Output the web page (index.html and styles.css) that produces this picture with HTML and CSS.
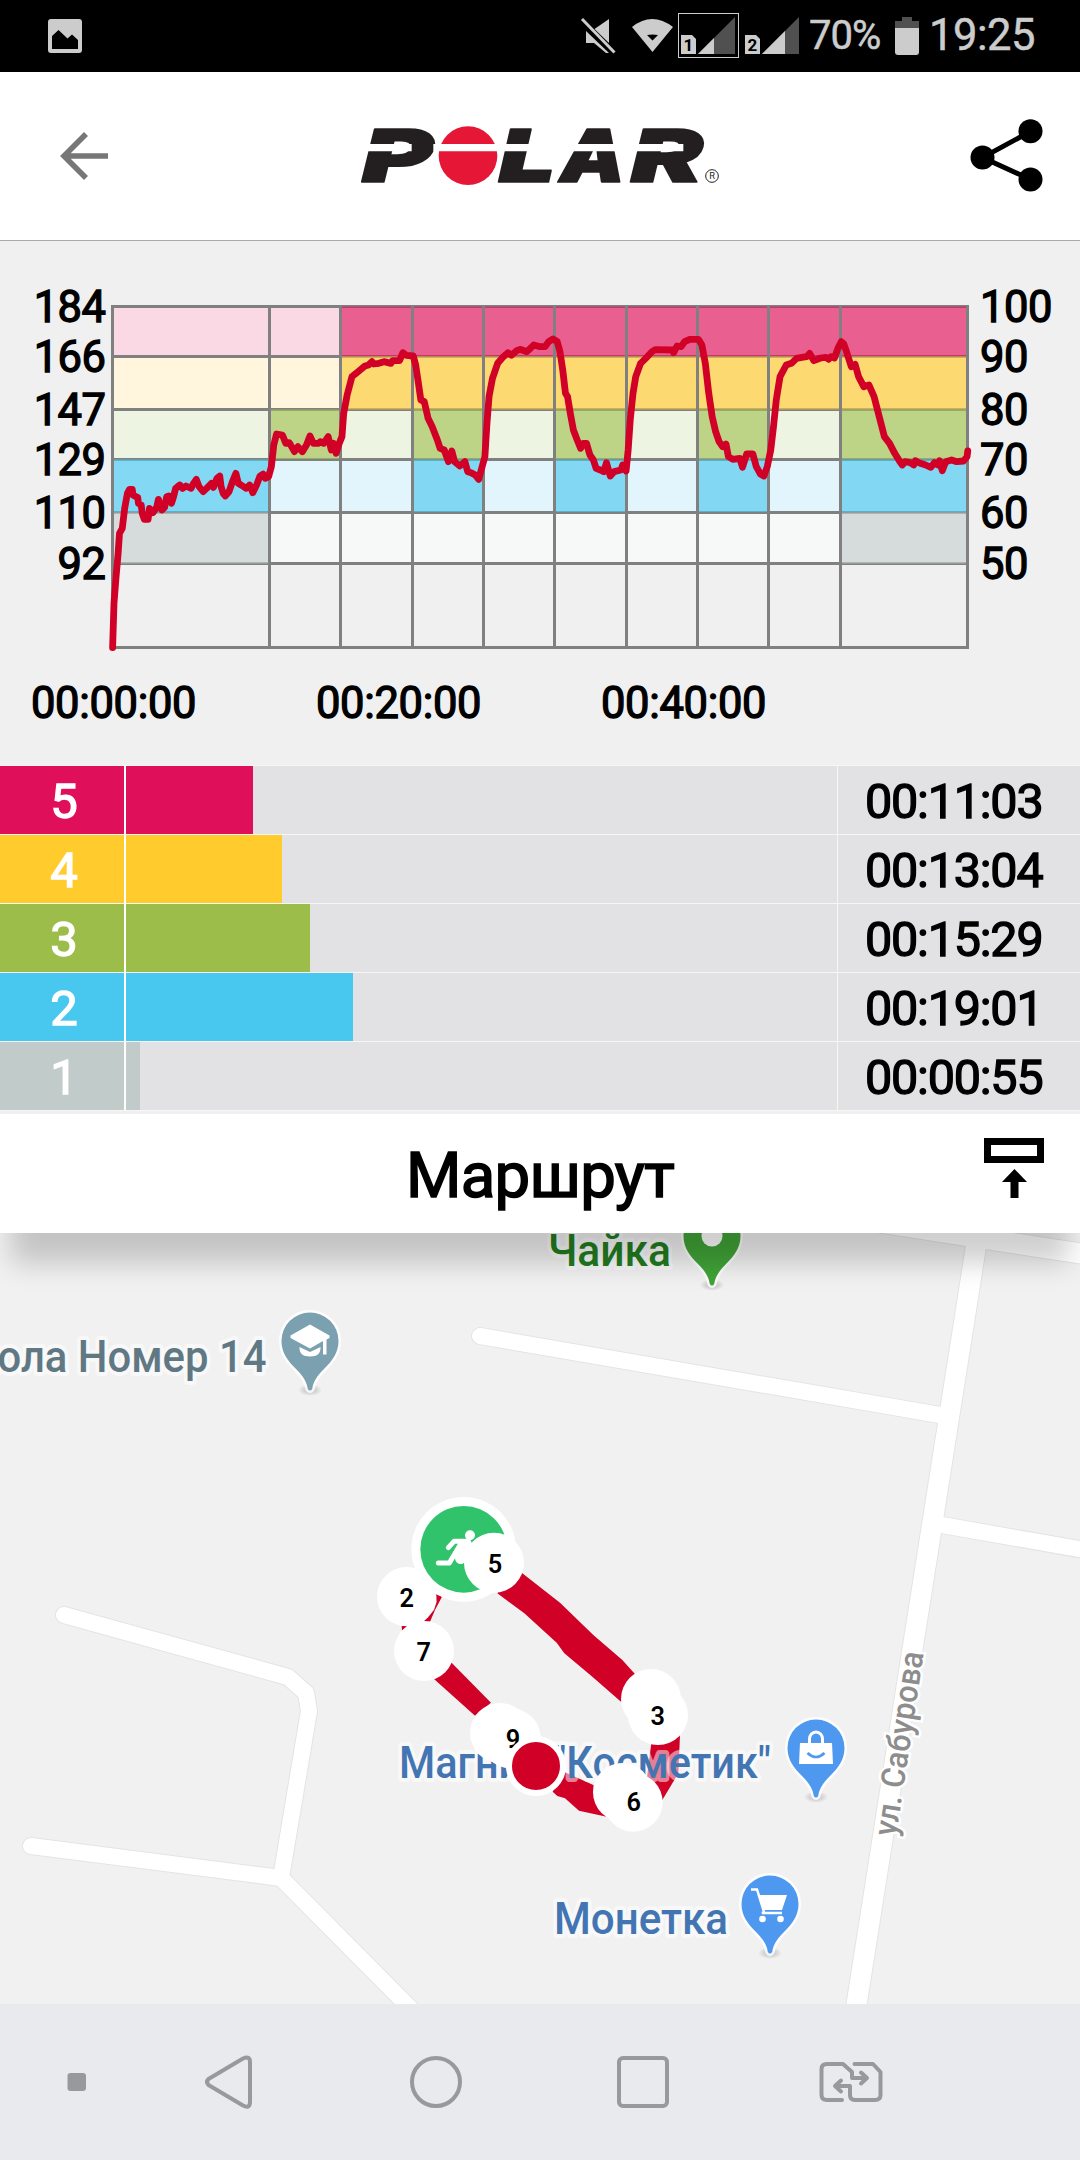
FILE: index.html
```html
<!DOCTYPE html>
<html lang="ru">
<head>
    <meta charset="UTF-8">
    <title>Polar</title>
    <link rel="stylesheet" href="styles.css">
</head>
<body>
    <div class="status-bar">
        <svg class="photo-icon" width="34" height="34" viewBox="0 0 34 34">
            <path fill="#ccc" fill-rule="evenodd" d="M3 0H31Q34 0 34 3V31Q34 34 31 34H3Q0 34 0 31V3Q0 0 3 0ZM4 17V30H30V21L24 15.500L19.500 19.500L10.500 11Z"/>
        </svg>
        <div class="status-right">
            <svg width="48" height="72" viewBox="578 0 48 72">
                <path fill="#ccc" d="M609 19V43L594.500 29Z"/>
                <path fill="#ccc" d="M586 31L609 53H606L594 43H586Z"/>
                <path stroke="#ccc" stroke-width="3" d="M582 19L614.500 52.500"/>
            </svg>
            <svg width="50" height="72" viewBox="626 0 50 72">
                <path fill="#ccc" fill-rule="evenodd" d="M632 27Q652 11 673 27L652.500 52ZM647 35L652.500 40.500L658 35Q652.500 34 647 35Z"/>
            </svg>
            <svg width="66" height="72" viewBox="676 0 66 72">
                <rect x="678.500" y="13.500" width="60" height="44" fill="none" stroke="#ccc"/>
                <path fill="#ccc" d="M681 35H692L696 39V54H681Z"/>
                <text x="688.500" y="51" class="sim">1</text>
                <path fill="#505050" d="M735 17V54H698Z"/>
                <path fill="#ccc" d="M714 38V54H698Z"/>
            </svg>
            <svg width="60" height="72" viewBox="742 0 60 72">
                <path fill="#ccc" d="M745 35H756L760 39V54H745Z"/>
                <text x="752.500" y="51" class="sim">2</text>
                <path fill="#505050" d="M799 17V54H762Z"/>
                <path fill="#ccc" d="M785 31V54H762Z"/>
            </svg>
            <span class="percent">70%</span>
            <svg width="24" height="72" viewBox="895 0 24 72">
                <path fill="#505050" d="M902 17H912V21H919V28H895V21H902Z"/>
                <path fill="#ccc" d="M895 28H919V52Q919 55 916 55H898Q895 55 895 52Z"/>
            </svg>
            <span class="clock">19:25</span>
        </div>
    </div>

    <div class="header">
        <svg width="48" height="48" viewBox="0 0 48 48">
            <path fill="none" stroke="#777" stroke-width="5.600" d="M48 24H6M26 2L4 24L26 46"/>
        </svg>
        <svg class="logo" width="362" height="62" viewBox="60 74 1086 186">
            <g class="logo-text">
                <text x="66" y="245" textLength="212" lengthAdjust="spacingAndGlyphs">P</text>
                <text x="476" y="245" textLength="170" lengthAdjust="spacingAndGlyphs">L</text>
                <text x="659" y="245" textLength="196" lengthAdjust="spacingAndGlyphs">A</text>
                <text x="872" y="245" textLength="216" lengthAdjust="spacingAndGlyphs">R</text>
            </g>
            <circle cx="384" cy="166" r="88" fill="#e51636"/>
            <path stroke="#fff" stroke-width="22" d="M60 142H215M280 142H860M880 142H1030"/>
            <circle cx="1116" cy="227" r="19" fill="none" stroke="#231f20" stroke-width="3"/>
            <text x="1116" y="237" class="reg">R</text>
        </svg>
        <svg width="74" height="74" viewBox="971 119 74 74">
            <path fill="none" stroke="#000" stroke-width="5" d="M1031.500 131.500L983.500 157.500L1031.500 179.500"/>
            <circle cx="983.500" cy="157.500" r="12"/>
            <circle cx="1031.500" cy="131.300" r="12"/>
            <circle cx="1031.500" cy="179.500" r="12"/>
        </svg>
    </div>

    <!-- heart rate -->
    <svg class="chart" width="1080" height="525" viewBox="0 241 1080 525">
        <!-- pale zones -->
        <path fill="#fad8e4" d="M112 306H341V356H112Z"/>
        <path fill="#fff6dd" d="M112 356H968V409H112Z"/>
        <path fill="#eef4e2" d="M112 409H270V459H112ZM341 409H412V459H341ZM484 409H555V459H484ZM626 409H698V459H626ZM768 409H840V459H768Z"/>
        <path fill="#e3f5fc" d="M270 459H412V512H270ZM484 459H555V512H484ZM626 459H698V512H626ZM768 459H840V512H768Z"/>
        <path fill="#f7f9f8" d="M270 512H840V564H270Z"/>
        <path class="grid" d="M111 306.500H969M112 356.500H968M112 409.500H968M112 459.500H968M112 512.500H968M112 563.500H968M111 647.500H969"/>
        <!-- target zones -->
        <g opacity=".65">
            <path fill="#e4135d" d="M341 306.500H968V356.500H341Z"/>
            <path fill="#fccb3a" d="M341 356.500H968V409.500H341Z"/>
            <path fill="#a3c54e" d="M270 409.500H341V459H270ZM412 409.500H484V459H412ZM555 409.500H626V459H555ZM698 409.500H768V459H698ZM840 409.500H968V459H840Z"/>
            <path fill="#48ccf5" d="M112 459.500H270V512H112ZM412 459.500H484V512H412ZM555 459.500H626V512H555ZM698 459.500H768V512H698ZM840 459.500H968V512H840Z"/>
            <path fill="#c7d2d0" d="M112 512.500H270V563.500H112ZM840 512.500H968V563.500H840Z"/>
        </g>
        <path class="grid" d="M112.500 306V648M269.500 306V648M340.500 306V648M412.500 306V648M483.500 306V648M554.500 306V648M626.500 306V648M697.500 306V648M768.500 306V648M840.500 306V648M967.500 306V648"/>
        <g transform="matrix(.34439 0 0 .33333 0 270)">
            <polyline class="hr" points="327,1133 331,1000 337,920 343,850 347,790 355,775 362,715 370,670 376,658 384,658 386,675 395,680 400,682 402,700 410,705 413,730 419,748 430,748 434,715 444,728 455,712 460,688 470,720 478,712 484,680 490,678 498,700 504,680 510,655 522,645 530,655 540,648 555,655 562,640 570,628 578,650 590,665 600,655 614,640 620,652 630,625 638,618 642,650 648,670 654,678 665,665 675,635 685,610 692,640 700,645 715,655 725,645 734,668 745,645 755,618 764,612 770,625 780,620 788,590 795,525 803,492 820,495 830,520 840,518 855,545 865,530 878,545 890,525 900,498 910,520 925,520 930,515 940,520 953,500 962,540 968,520 976,550 985,520 993,500 998,430 1008,375 1022,320 1040,305 1060,288 1070,285 1080,275 1085,282 1100,280 1115,275 1135,280 1140,272 1160,272 1170,248 1180,256 1200,258 1207,285 1215,340 1222,390 1232,395 1243,445 1255,470 1270,510 1278,535 1290,540 1302,575 1312,543 1320,575 1335,588 1350,575 1358,605 1368,608 1380,615 1390,628 1400,590 1408,560 1414,460 1420,380 1430,325 1445,280 1460,262 1475,248 1485,256 1500,242 1510,238 1530,245 1550,225 1568,230 1583,230 1593,215 1606,207 1618,215 1626,245 1634,300 1642,370 1648,380 1656,430 1665,480 1676,510 1686,535 1693,520 1703,520 1713,555 1723,570 1731,595 1743,600 1753,605 1761,578 1772,618 1783,605 1803,600 1808,585 1818,603 1824,540 1830,450 1838,370 1846,320 1860,280 1878,262 1893,245 1903,239 1953,240 1956,248 1966,228 1978,230 1988,215 2003,208 2028,208 2038,225 2048,280 2058,370 2068,440 2078,485 2088,515 2098,530 2108,522 2115,560 2128,568 2148,565 2156,592 2168,552 2186,552 2196,590 2208,612 2218,618 2228,590 2238,540 2246,470 2254,390 2265,320 2283,285 2298,280 2313,265 2328,262 2343,260 2351,250 2363,272 2383,264 2398,262 2406,268 2413,260 2423,264 2433,235 2443,215 2450,222 2458,245 2472,290 2483,283 2493,320 2508,350 2523,345 2538,380 2553,440 2568,500 2583,520 2598,550 2613,575 2620,585 2628,575 2643,578 2653,585 2658,572 2668,578 2688,585 2703,592 2713,578 2723,585 2728,572 2736,602 2746,575 2763,570 2778,575 2798,573 2808,560 2810,543"/>
        </g>
        <g class="axis end">
            <text x="105.500" y="322">184</text>
            <text x="105.500" y="372">166</text>
            <text x="105.500" y="425">147</text>
            <text x="105.500" y="475">129</text>
            <text x="105.500" y="528">110</text>
            <text x="105.500" y="579">92</text>
        </g>
        <g class="axis">
            <text x="980" y="322">100</text>
            <text x="980" y="372">90</text>
            <text x="980" y="425">80</text>
            <text x="980" y="475">70</text>
            <text x="980" y="528">60</text>
            <text x="980" y="579">50</text>
        </g>
        <g class="axis">
            <text x="31" y="717.500" textLength="165">00:00:00</text>
            <text x="316" y="717.500" textLength="165">00:20:00</text>
            <text x="601" y="717.500" textLength="165">00:40:00</text>
        </g>
    </svg>

    <div class="zones">
        <div class="zone z5">
            <div class="num">5</div>
            <div class="track"><div class="bar" style="width: 127px"></div></div>
            <div class="time">00:11:03</div>
        </div>
        <div class="zone z4">
            <div class="num">4</div>
            <div class="track"><div class="bar" style="width: 156px"></div></div>
            <div class="time">00:13:04</div>
        </div>
        <div class="zone z3">
            <div class="num">3</div>
            <div class="track"><div class="bar" style="width: 184px"></div></div>
            <div class="time">00:15:29</div>
        </div>
        <div class="zone z2">
            <div class="num">2</div>
            <div class="track"><div class="bar" style="width: 227px"></div></div>
            <div class="time">00:19:01</div>
        </div>
        <div class="zone z1">
            <div class="num">1</div>
            <div class="track"><div class="bar" style="width: 14px"></div></div>
            <div class="time">00:00:55</div>
        </div>
    </div>

    <div class="route-title">
        <h2>Маршрут</h2>
        <svg width="60" height="60" viewBox="984 1138 60 60">
            <path fill="none" stroke="#000" stroke-width="7" d="M987.500 1141.500H1040.500V1159.500H987.500Z"/>
            <path d="M1014.500 1169L1027 1182H1018.500V1198H1010.500V1182H1002Z"/>
        </svg>
    </div>

    <svg class="map" width="1080" height="771" viewBox="0 1233 1080 771">
        <defs>
            <path id="pin" d="M-28.500 0A28.500 28.500 0 0 1 28.500 0C28.500 12 22 20 14 28C7 35 3 41 2.200 48Q0 51 -2.200 48C-3 41 -7 35 -14 28C-22 20 -28.500 12 -28.500 0Z"/>
            <radialGradient id="shade">
                <stop offset="0" stop-color="#000" stop-opacity=".25"/>
                <stop offset="1" stop-color="#000" stop-opacity="0"/>
            </radialGradient>
            <g id="roads">
                <path d="M480 1336L940 1415M942 1525L1090 1551M64 1615L288 1677L306 1693L309 1711L281 1878L412 2010M31 1846L281 1878"/>
            </g>
            <g id="main-roads">
                <path d="M870 1221L1090 1255M977 1240L855 2014"/>
            </g>
        </defs>
        <use href="#roads" class="case"/>
        <use href="#main-roads" class="case wide"/>
        <use href="#roads" class="road"/>
        <use href="#main-roads" class="road wide"/>

        <text class="street" transform="translate(896 1837) rotate(-81.400)" textLength="186" lengthAdjust="spacingAndGlyphs">ул. Сабурова</text>

        <g transform="translate(712 1236)">
            <ellipse cy="49" rx="12" ry="6" fill="url(#shade)"/>
            <use href="#pin" class="pin" fill="#40a337"/>
            <circle r="10.500" fill="#fff"/>
        </g>
        <text x="548" y="1266" class="poi green" textLength="123" lengthAdjust="spacingAndGlyphs">Чайка</text>

        <g transform="translate(310 1341)">
            <ellipse cy="49" rx="12" ry="6" fill="url(#shade)"/>
            <use href="#pin" class="pin" fill="#7ba0b0"/>
            <path fill="#fff" d="M0 -16.500L19.500 -5.500V-3L16.500 -1.500V13.500H13V0L0 7.500L-19.500 -3V-5.500ZM-10.500 6L0 11L10.500 6Q11 15.500 0 15.500Q-11 15.500 -10.500 6Z"/>
        </g>
        <text transform="translate(266.500 1372) scale(.93 1)" class="poi school">Школа Номер 14</text>

        <g transform="translate(816 1748)">
            <ellipse cy="49" rx="12" ry="6" fill="url(#shade)"/>
            <use href="#pin" class="pin" fill="#4f98f0"/>
            <path fill="#fff" d="M-16 -5H16L17 16H-17Z"/>
            <path fill="none" stroke="#fff" stroke-width="3" d="M-6.500 -5V-9A6.500 7 0 0 1 6.500 -9V-5"/>
            <path fill="none" stroke="#4f98f0" stroke-width="2.500" d="M-8.500 5Q0 13 8.500 5"/>
        </g>
        <g transform="translate(770 1904)">
            <ellipse cy="49" rx="12" ry="6" fill="url(#shade)"/>
            <use href="#pin" class="pin" fill="#4f98f0"/>
            <path fill="#fff" d="M-12 -9H17L12 6H-7Z"/>
            <path fill="none" stroke="#fff" stroke-width="2.500" d="M-19 -14.500H-13L-6 8L-8 9H12"/>
            <circle cx="-7.500" cy="15" r="3.300" fill="#fff"/>
            <circle cx="10.500" cy="15" r="3.300" fill="#fff"/>
        </g>
        <text x="554" y="1934" class="poi shop" textLength="174" lengthAdjust="spacingAndGlyphs">Монетка</text>

        <g transform="translate(360 1480) scale(.33333)">
            <g fill="#d00027">
                <path d="M460 255L487 280L600 368L700 465L787 540L850 610L783 665L697 590L613 520L590 488L493 400L412 340Z"/>
                <path d="M260 533L393 668L345 707L222 597Z"/>
                <path d="M875 780L960 765L955 880L907 960L860 900Z"/>
                <path d="M600 870L700 915L740 1010L657 992L615 955L592 948L578 935Z"/>
                <path d="M228 343L246 350L225 390L210 425H190L222 390L230 365ZM125 438H142L126 452Z"/>
            </g>
        </g>
        <text x="399" y="1777.500" class="poi shop" textLength="372" lengthAdjust="spacingAndGlyphs">Магнит "Косметик"</text>
        <g transform="translate(360 1480) scale(.33333)">
            <g fill="#fff">
                <circle cx="140" cy="350" r="89"/>
                <circle cx="311" cy="208" r="157"/>
                <circle cx="192" cy="513" r="90"/>
                <circle cx="420" cy="759" r="90"/>
                <circle cx="452" cy="775" r="90"/>
                <circle cx="873" cy="657" r="90"/>
                <circle cx="894" cy="705" r="90"/>
                <circle cx="787" cy="937" r="88"/>
                <circle cx="820" cy="967" r="88"/>
            </g>
            <circle cx="311" cy="208" r="130" fill="#30c36c"/>
            <g stroke="#fff" stroke-width="15" stroke-linecap="round" stroke-linejoin="round" fill="none">
                <path d="M265 203L282 184H325M235 249H268L300 195"/>
                <path stroke-width="34" d="M320 195L302 235"/>
            </g>
            <circle cx="330" cy="166" r="15" fill="#fff"/>
            <circle cx="402" cy="248" r="90" fill="#fff"/>
            <g class="lap">
                <text x="405" y="278">5</text>
                <text x="140" y="381">2</text>
                <text x="191" y="543">7</text>
                <text x="459" y="805">9</text>
                <text x="893" y="734">3</text>
                <text x="821" y="994">6</text>
            </g>
            <circle cx="528" cy="858" r="81" fill="#d00027" stroke="#fff" stroke-width="18"/>
        </g>
    </svg>

    <div class="nav">
        <svg width="1080" height="156" viewBox="0 2004 1080 156">
            <rect x="67.500" y="2073" width="18.500" height="18" rx="3" fill="#98999c"/>
            <g class="nav-icon">
                <path d="M208.500 2079L243 2058.500Q250 2055.500 250 2062V2102Q250 2109 243 2105.500L208.500 2085Q205.500 2082 208.500 2079Z"/>
                <circle cx="436" cy="2082" r="24"/>
                <rect x="619" y="2058" width="48" height="48" rx="4"/>
                <path d="M842 2100H827Q821.500 2100 821.500 2095V2069Q821.500 2064 827 2064H843L852 2072V2078H866M861 2072.500L867 2078L861 2083.500"/>
                <path d="M854.500 2064H873L880.500 2072V2095Q880.500 2100 875 2100H855Q850 2100 850 2095V2086H836M841 2080.500L835 2086L841 2091.500"/>
            </g>
        </svg>
    </div>
</body>
</html>
```
FILE: styles.css
```css
* {
    margin: 0;
    padding: 0;
    box-sizing: border-box;
}
body {
    width: 1080px;
    height: 2160px;
    overflow: hidden;
    font-family: Roboto, sans-serif;
    background-color: #f0f0f0;
    color: #000;
}
svg {
    display: block;
    flex-shrink: 0;
}
.status-bar {
    height: 72px;
    padding: 0 45px 0 48px;
    display: flex;
    align-items: center;
    justify-content: space-between;
    background-color: #000;
    color: #ccc;
}
.status-right {
    display: flex;
    align-items: center;
}
.sim {
    font-size: 17px;
    font-weight: 700;
    text-anchor: middle;
}
.percent {
    width: 86px;
    margin-left: 7px;
    font-size: 40px;
    letter-spacing: -1px;
    line-height: 74px;
    -webkit-text-stroke: 0.5px #ccc;
}
.clock {
    margin-left: 10px;
    width: 106px;
    font-size: 43.5px;
    letter-spacing: -0.5px;
    line-height: 74px;
    white-space: nowrap;
    -webkit-text-stroke: 0.5px #ccc;
}
.header {
    height: 169px;
    padding: 0 36px 0 60px;
    display: flex;
    align-items: center;
    justify-content: space-between;
    background-color: #fff;
    border-bottom: 1px solid #aaa;
}
.logo {
    margin-left: 3px;
    overflow: visible;
}
.logo-text {
    font-family: Inter, sans-serif;
    font-size: 220px;
    font-weight: 900;
    font-style: italic;
    fill: #231f20;
    stroke: #231f20;
    stroke-width: 5px;
    stroke-linejoin: round;
}
.reg {
    font-size: 28px;
    text-anchor: middle;
    fill: #231f20;
}
.grid {
    fill: none;
    stroke: #808080;
    stroke-width: 3;
}
.hr {
    fill: none;
    stroke: #d00027;
    stroke-width: 6.8;
    stroke-linejoin: round;
    stroke-linecap: round;
    vector-effect: non-scaling-stroke;
}
.axis {
    font-size: 43.5px;
    letter-spacing: -0.5px;
    stroke: #000;
    stroke-width: 1.3px;
}
.end {
    text-anchor: end;
}
.zones {
    height: 348px;
    display: flex;
    flex-direction: column;
    gap: 1px;
}
.zone {
    height: 68px;
    display: flex;
    background-color: #e2e2e4;
    outline: 1px solid #f6f6f7;
}
.num {
    width: 126px;
    padding-left: 4px;
    border-right: 2px solid #fff;
    color: #fff;
    font-size: 49px;
    -webkit-text-stroke: 1.3px #fff;
    line-height: 71px;
    text-align: center;
}
.track {
    flex: 1;
    border-right: 1px solid #f6f6f7;
}
.bar {
    height: 68px;
}
.time {
    width: 242px;
    padding-left: 27px;
    font-size: 48.5px;
    -webkit-text-stroke: 1.3px #000;
    line-height: 71px;
    letter-spacing: -1.2px;
}
.z5 .num, .z5 .bar {
    background-color: #e00f5a;
}
.z4 .num, .z4 .bar {
    background-color: #ffcb2d;
}
.z3 .num, .z3 .bar {
    background-color: #9cbd4a;
}
.z2 .num, .z2 .bar {
    background-color: #48c7ef;
}
.z1 .num, .z1 .bar {
    background-color: #c1cbc9;
}
.route-title {
    position: relative;
    height: 119px;
    padding: 0 36px 0 96px;
    display: flex;
    align-items: center;
    background-color: #fff;
    box-shadow: 0 41px 26px -11px rgba(0, 0, 0, 0.19);
}
.route-title h2 {
    flex: 1;
    font-size: 63.5px;
    font-weight: 400;
    -webkit-text-stroke: 1.6px #000;
    letter-spacing: -0.7px;
    line-height: 119px;
    padding-top: 4px;
    text-align: center;
}
.route-title svg {
    margin-bottom: 12px;
}
.map {
    background-color: #f1f1f1;
}
.case, .road {
    fill: none;
    stroke-linecap: round;
    stroke-linejoin: round;
}
.case {
    stroke: #e4e4e4;
    stroke-width: 18px;
}
.road {
    stroke: #fff;
    stroke-width: 16px;
}
.case.wide {
    stroke-width: 22px;
}
.road.wide {
    stroke-width: 20px;
}
.pin {
    stroke: rgba(255, 255, 255, 0.85);
    stroke-width: 5px;
    paint-order: stroke;
}
.poi {
    font-size: 45px;
    font-weight: 500;
    stroke: rgba(255, 255, 255, 0.5);
    stroke-width: 8px;
    stroke-linejoin: round;
    paint-order: stroke;
}
.green {
    fill: #227d1f;
}
.school {
    fill: #5f7883;
    text-anchor: end;
}
.shop {
    fill: #4375b3;
}
.street {
    font-size: 33px;
    font-weight: 500;
    fill: #8d8d8d;
    stroke: #fff;
    stroke-width: 5px;
    paint-order: stroke;
}
.lap {
    font-size: 76px;
    font-weight: 600;
    text-anchor: middle;
}
.nav {
    height: 156px;
    background-color: #e8eaed;
}
.nav-icon {
    fill: none;
    stroke: #98999c;
    stroke-width: 4;
    stroke-linecap: round;
    stroke-linejoin: round;
}
```
